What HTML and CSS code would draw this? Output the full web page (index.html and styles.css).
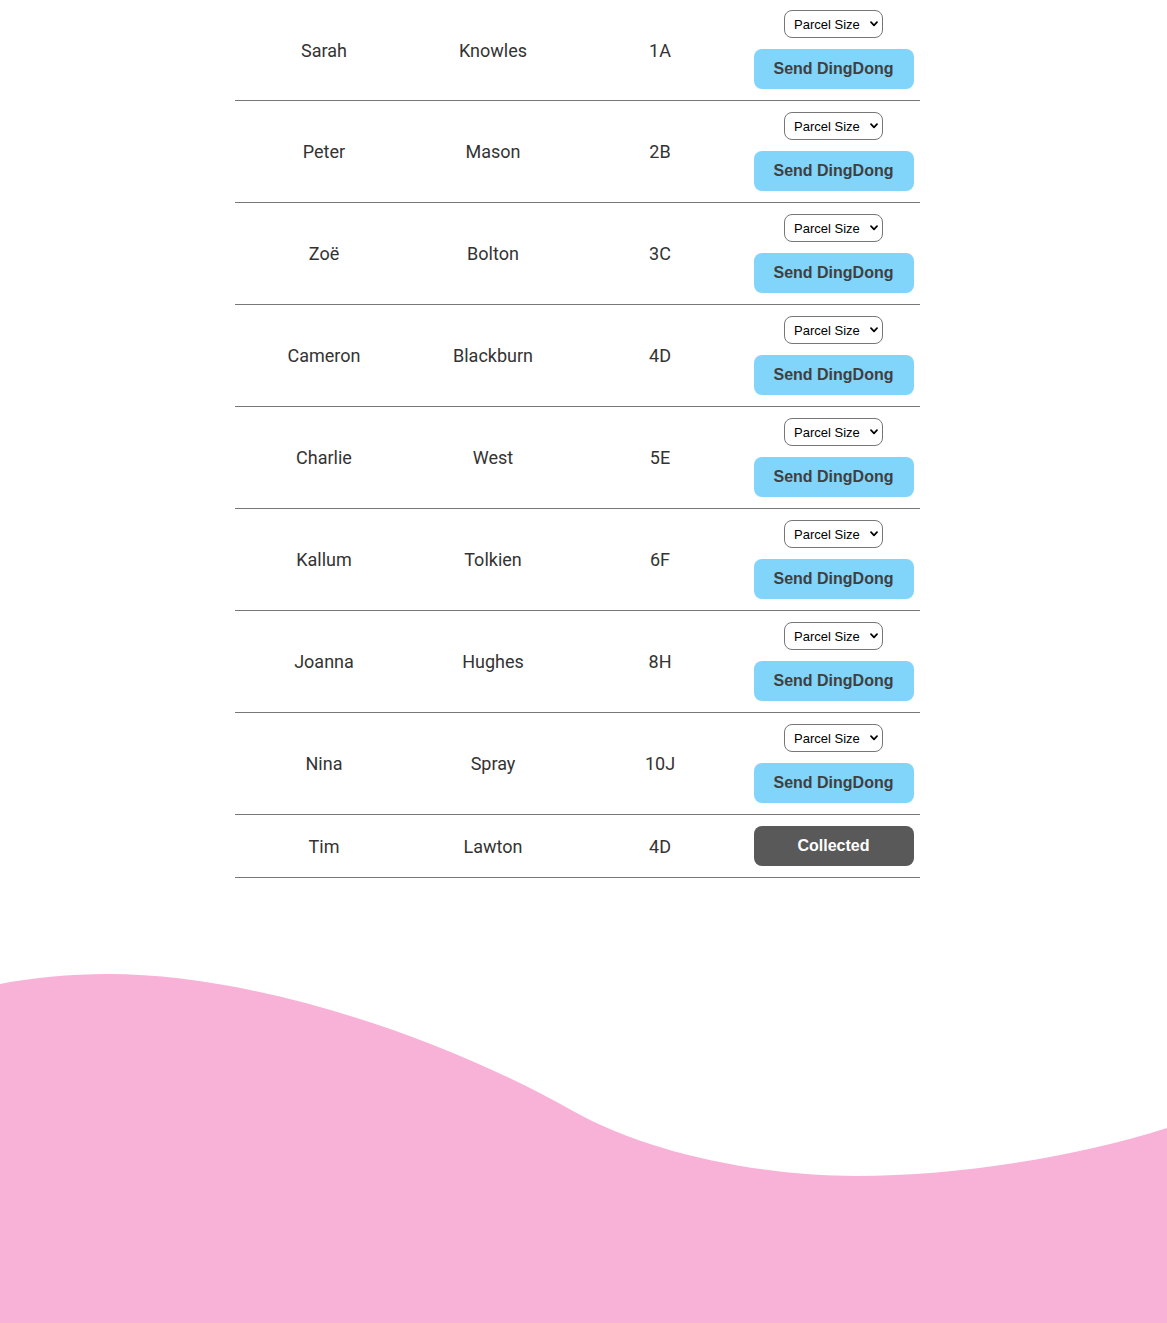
FILE: index.html
```html
<!DOCTYPE html>
<html lang="en">
<head>
<meta charset="utf-8">
<title>DingDong</title>
<link rel="stylesheet" href="styles.css">
</head>
<body>
<main class="page">
  <table class="residents">
    <colgroup>
      <col class="c-first"><col class="c-last"><col class="c-flat"><col class="c-action">
    </colgroup>
    <tbody>
      <tr><td>Sarah</td><td>Knowles</td><td>1A</td><td class="action"><div class="stack"><span class="picker"><select><option>Parcel Size</option><option>Small</option><option>Medium</option><option>Large</option></select><svg class="chev" viewBox="0 0 8 6" width="8" height="6"><path d="M1 1.2 L4 4.4 L7 1.2" fill="none" stroke="#000" stroke-width="1.7" stroke-linecap="round" stroke-linejoin="round"/></svg></span><button class="send">Send DingDong</button></div></td></tr>
      <tr><td>Peter</td><td>Mason</td><td>2B</td><td class="action"><div class="stack"><span class="picker"><select><option>Parcel Size</option><option>Small</option><option>Medium</option><option>Large</option></select><svg class="chev" viewBox="0 0 8 6" width="8" height="6"><path d="M1 1.2 L4 4.4 L7 1.2" fill="none" stroke="#000" stroke-width="1.7" stroke-linecap="round" stroke-linejoin="round"/></svg></span><button class="send">Send DingDong</button></div></td></tr>
      <tr><td>Zoë</td><td>Bolton</td><td>3C</td><td class="action"><div class="stack"><span class="picker"><select><option>Parcel Size</option><option>Small</option><option>Medium</option><option>Large</option></select><svg class="chev" viewBox="0 0 8 6" width="8" height="6"><path d="M1 1.2 L4 4.4 L7 1.2" fill="none" stroke="#000" stroke-width="1.7" stroke-linecap="round" stroke-linejoin="round"/></svg></span><button class="send">Send DingDong</button></div></td></tr>
      <tr><td>Cameron</td><td>Blackburn</td><td>4D</td><td class="action"><div class="stack"><span class="picker"><select><option>Parcel Size</option><option>Small</option><option>Medium</option><option>Large</option></select><svg class="chev" viewBox="0 0 8 6" width="8" height="6"><path d="M1 1.2 L4 4.4 L7 1.2" fill="none" stroke="#000" stroke-width="1.7" stroke-linecap="round" stroke-linejoin="round"/></svg></span><button class="send">Send DingDong</button></div></td></tr>
      <tr><td>Charlie</td><td>West</td><td>5E</td><td class="action"><div class="stack"><span class="picker"><select><option>Parcel Size</option><option>Small</option><option>Medium</option><option>Large</option></select><svg class="chev" viewBox="0 0 8 6" width="8" height="6"><path d="M1 1.2 L4 4.4 L7 1.2" fill="none" stroke="#000" stroke-width="1.7" stroke-linecap="round" stroke-linejoin="round"/></svg></span><button class="send">Send DingDong</button></div></td></tr>
      <tr><td>Kallum</td><td>Tolkien</td><td>6F</td><td class="action"><div class="stack"><span class="picker"><select><option>Parcel Size</option><option>Small</option><option>Medium</option><option>Large</option></select><svg class="chev" viewBox="0 0 8 6" width="8" height="6"><path d="M1 1.2 L4 4.4 L7 1.2" fill="none" stroke="#000" stroke-width="1.7" stroke-linecap="round" stroke-linejoin="round"/></svg></span><button class="send">Send DingDong</button></div></td></tr>
      <tr><td>Joanna</td><td>Hughes</td><td>8H</td><td class="action"><div class="stack"><span class="picker"><select><option>Parcel Size</option><option>Small</option><option>Medium</option><option>Large</option></select><svg class="chev" viewBox="0 0 8 6" width="8" height="6"><path d="M1 1.2 L4 4.4 L7 1.2" fill="none" stroke="#000" stroke-width="1.7" stroke-linecap="round" stroke-linejoin="round"/></svg></span><button class="send">Send DingDong</button></div></td></tr>
      <tr><td>Nina</td><td>Spray</td><td>10J</td><td class="action"><div class="stack"><span class="picker"><select><option>Parcel Size</option><option>Small</option><option>Medium</option><option>Large</option></select><svg class="chev" viewBox="0 0 8 6" width="8" height="6"><path d="M1 1.2 L4 4.4 L7 1.2" fill="none" stroke="#000" stroke-width="1.7" stroke-linecap="round" stroke-linejoin="round"/></svg></span><button class="send">Send DingDong</button></div></td></tr>
      <tr><td>Tim</td><td>Lawton</td><td>4D</td><td class="action"><div class="stack"><button class="collected">Collected</button></div></td></tr>
    </tbody>
  </table>
  <svg class="wave" viewBox="0 0 1167 383" preserveAspectRatio="none" width="1167" height="383">
    <path d="M0 43 C30 37 70 33 108 33 C260 33 450 100 573 170 C647 212 760 235 856 235 C960 235 1080 215 1167 187 L1167 383 L0 383 Z" fill="#f8b1d7"/>
  </svg>
</main>
</body>
</html>
```

FILE: styles.css
```css
html, body {
  margin: 0;
  padding: 0;
  background: #ffffff;
}

.page {
  display: flex;
  flex-direction: column;
}

.residents {
  border-collapse: collapse;
  width: 685px;
  margin-left: 235px;
  table-layout: fixed;
  font-family: Roboto, "Liberation Sans", sans-serif;
  font-size: 18px;
  color: #333333;
}

.c-first { width: 178px; }
.c-last { width: 160px; }
.c-flat { width: 174px; }
.c-action { width: 173px; }

.residents td {
  text-align: center;
  vertical-align: middle;
  padding: 0;
  border-bottom: 1px solid #777777;
}

.residents td.action {
  padding: 11px 0;
}

.residents tr:first-child td.action {
  padding-top: 10px;
}

.stack {
  display: flex;
  flex-direction: column;
  align-items: center;
  gap: 11px;
}

.picker {
  position: relative;
  display: inline-block;
  height: 28px;
}

.picker select {
  appearance: none;
  -webkit-appearance: none;
  box-sizing: border-box;
  width: 99px;
  height: 28px;
  margin: 0;
  padding: 0 0 0 9px;
  border: 1px solid #767676;
  border-radius: 8px;
  background: #ffffff;
  font-family: "Liberation Sans", Arial, sans-serif;
  font-size: 13px;
  color: #000000;
  display: block;
}

.chev {
  position: absolute;
  right: 5px;
  top: 11px;
  pointer-events: none;
}

.send,
.collected {
  box-sizing: border-box;
  width: 160px;
  height: 40px;
  margin: 0;
  padding: 0;
  border: none;
  border-radius: 8px;
  font-family: "Liberation Sans", Arial, sans-serif;
  font-weight: bold;
  font-size: 16px;
}

.send {
  background: #81d4fa;
  color: #3f3f3f;
}

.collected {
  background: #595959;
  color: #ffffff;
}

.wave {
  display: block;
  margin-top: 63px;
  width: 1167px;
  height: 383px;
}
```
